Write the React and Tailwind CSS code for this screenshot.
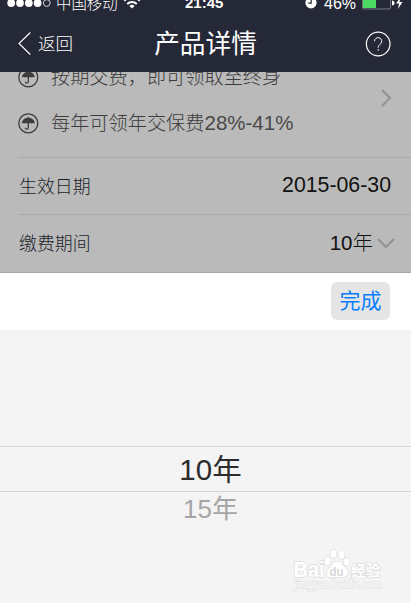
import { useState } from "react"

const OPTIONS = ["10", "15"]

function StatusBar() {
  return (
    <div className="flex h-[15px] shrink-0 items-end overflow-hidden">
      <div className="relative h-[22px] w-full text-white">
        <svg className="absolute left-[7px] top-[6px]" width="44" height="10" viewBox="0 0 44 10">
          <circle cx="4.2" cy="4" r="3.9" fill="#fff" />
          <circle cx="13" cy="4" r="3.9" fill="#fff" />
          <circle cx="21.8" cy="4" r="3.9" fill="#fff" />
          <circle cx="30.6" cy="4" r="3.9" fill="#fff" />
          <circle cx="39.8" cy="4" r="3.4" fill="none" stroke="#fff" strokeWidth="0.8" />
        </svg>
        <span className="absolute left-[56px] top-px text-[15.4px] leading-[20px] font-light whitespace-nowrap">中国移动</span>
        <svg className="absolute left-[123px] top-[3px]" width="18" height="13" viewBox="0 0 18 13" fill="none" stroke="#fff">
          <path d="M1.2 4.8a11 11 0 0 1 15.6 0" strokeWidth="2" />
          <path d="M4.2 8a6.8 6.8 0 0 1 9.6 0" strokeWidth="2" />
          <path d="M6.4 10a3.7 3.7 0 0 1 5.2 0L9 12.6z" fill="#fff" stroke="none" />
        </svg>
        <span className="absolute left-[185px] top-0 text-[15px] leading-[20px] font-bold">21:45</span>
        <svg className="absolute left-[305px] top-[3px]" width="12" height="13" viewBox="0 0 12 13">
          <circle cx="6" cy="6.8" r="5.6" fill="#fff" />
          <path d="M6.2 3v4.2H3.2" fill="none" stroke="#252836" strokeWidth="1.2" />
        </svg>
        <span className="absolute left-[324px] top-0 text-[16px] leading-[21px] whitespace-nowrap">46%</span>
        <svg className="absolute left-[362px] top-[2px]" width="42" height="15" viewBox="0 0 42 15">
          <rect x="0.5" y="1.5" width="28" height="12.5" rx="1.5" fill="none" stroke="#777985" />
          <rect x="1" y="2" width="13" height="11" fill="#4cd964" />
          <path d="M30 5.5a2.5 2.5 0 0 1 0 5z" fill="#fff" />
          <path d="M38.5 2L34 8.5h3l-1 5.5 4.5-7h-3z" fill="#fff" />
        </svg>
      </div>
    </div>
  )
}

function Header() {
  return (
    <header className="flex h-[72px] shrink-0 flex-col bg-[#252836] text-white">
      <StatusBar />
      <div className="grid h-[57px] grid-cols-[1fr_auto_1fr] items-center pl-[18px] pr-5">
        <button className="flex items-center gap-[7px] text-[17.5px] font-light">
          <svg width="13" height="23" viewBox="0 0 13 23" fill="none" stroke="#fff" strokeWidth="1.1">
            <path d="M12.3 0.5L1 11.5l11.3 11" />
          </svg>
          <span className="pt-[2px]">返回</span>
        </button>
        <h1 className="pl-[2px] text-[25.7px] leading-[30px]">产品详情</h1>
        <button className="justify-self-end">
          <svg width="26" height="26" viewBox="0 0 26 26" fill="none" stroke="#fff">
            <circle cx="13.2" cy="13" r="11.8" strokeWidth="1.2" />
            <path d="M9.5 10.2a3.6 3.6 0 1 1 6.2 2.5c-1.3 1.2-2.5 1.9-2.5 4M13.2 18.2v1.6" strokeWidth="1" />
          </svg>
        </button>
      </div>
    </header>
  )
}

function Umbrella() {
  return (
    <svg className="shrink-0" width="21" height="21" viewBox="0 0 21 21" fill="none" stroke="#3c3c3c">
      <circle cx="10.3" cy="10.3" r="9.5" strokeWidth="1.3" />
      <path d="M3.8 10.6C4 7.2 6.6 5 9.8 4.7V3.8h1v.9c3.200.300 5.900 2.500 6.100 5.900-1-.9-2.200-.9-3.200 0-1-.9-1.900-.9-2.900 0h-1c-1-.9-1.900-.9-2.900 0-1-.9-2.100-.9-3.100 0z" fill="#3c3c3c" stroke="none" />
      <path d="M10.300 10v4.700c0 2-3 2-3 0" strokeWidth="1.300" />
    </svg>
  )
}

function Details({ years }) {
  return (
    <main className="flex h-[201px] shrink-0 flex-col overflow-hidden border-b border-[#a6a6a6] bg-[#bababa] pl-[18px]">
      <div className="flex h-[86px] shrink-0 items-end justify-between border-b border-[#a9a9a9] pr-[19px]">
        <div className="flex flex-col pb-[20px] text-[19.2px] leading-[28px] text-[#3c3c3c] font-light">
          <div className="flex h-[46px] items-start gap-[12px] whitespace-nowrap">
            <div className="flex h-[28px] items-center">
              <Umbrella />
            </div>
            <span className="pt-px">按期交费，即可领取至终身</span>
          </div>
          <div className="flex h-[28px] items-center gap-[12px] whitespace-nowrap">
            <Umbrella />
            <span>
              每年可领年交保费<span className="text-[20.5px] text-[#484848]">28%-41%</span>
            </span>
          </div>
        </div>
        <svg className="mb-[50px]" width="11" height="18" viewBox="0 0 11 18" fill="none" stroke="#929292" strokeWidth="2">
          <path d="M1 1l8 8-8 8" />
        </svg>
      </div>
      <div className="flex h-[57px] shrink-0 items-center justify-between border-b border-[#a9a9a9] pr-[20px]">
        <span className="pt-[2px] pl-px text-[17.9px] font-light text-[#1b1e2b]">生效日期</span>
        <span className="text-[21.3px] text-[#111]">2015-06-30</span>
      </div>
      <div className="flex h-[57px] shrink-0 items-center justify-between pr-[16px]">
        <span className="pt-[2px] pl-px text-[17.9px] font-light text-[#1b1e2b]">缴费期间</span>
        <span className="flex items-center gap-[4px] text-[20.5px] font-light text-[#111]">
          {years}年
          <svg width="18" height="11" viewBox="0 0 18 11" fill="none" stroke="#929292" strokeWidth="2">
            <path d="M1 1l8 8 8-8" />
          </svg>
        </span>
      </div>
    </main>
  )
}

function Watermark() {
  return (
    <svg className="absolute left-[290px] top-[546px]" width="96" height="48" viewBox="0 0 96 48" fill="#fff" stroke="#dcdcdc" strokeWidth="1.4" paintOrder="stroke">
      <ellipse cx="37.7" cy="15" rx="3" ry="4" />
      <ellipse cx="43.3" cy="8" rx="3" ry="4.2" />
      <ellipse cx="51.5" cy="8.800" rx="3" ry="4.200" />
      <ellipse cx="56.700" cy="16" rx="3" ry="3.800" />
      <path d="M47 15.500c-4 0-5 4.500-8 7-3.500 3-3.500 8.500 1.500 8.500h13c5 0 6-5.500 2.500-8.500-3-2.500-4-7-9-7z" />
      <g className="font-bold">
        <text x="3.500" y="31" fontSize="21.500" textLength="31" lengthAdjust="spacingAndGlyphs">Bai</text>
        <text x="39.500" y="29.500" fontSize="12.500" fill="#d8d8d8" stroke="none" textLength="14" lengthAdjust="spacingAndGlyphs">du</text>
        <text x="61" y="29.500" fontSize="15" textLength="29.500" lengthAdjust="spacingAndGlyphs">经验</text>
      </g>
      <text className="font-['Liberation_Serif',serif]" x="4" y="41.500" fontSize="12" strokeWidth="1" textLength="88" lengthAdjust="spacingAndGlyphs">jingyan.baidu.com</text>
    </svg>
  )
}

function Picker({ years, onSelect }) {
  return (
    <section className="flex flex-1 flex-col bg-[#f4f4f4]">
      <div className="flex h-[57px] shrink-0 items-center justify-end bg-white pr-[21px] pb-px">
        <button className="h-[38px] w-[59px] rounded-[6px] bg-[#e5e5e5] text-[21px] leading-[38px] text-[#087dff]">完成</button>
      </div>
      <div className="flex flex-col items-center pt-[116px]">
        {OPTIONS.map((option) =>
          option === years ? (
            <button
              key={option}
              className="h-[46px] w-full border-y border-[#d5d5d5] pl-[10px] text-[29.5px] leading-[46px] text-[#2c2c2c]"
              onClick={() => onSelect(option)}
            >
              {option}年
            </button>
          ) : (
            <button
              key={option}
              className="h-[35px] w-full pl-[10px] text-[26px] leading-[35px] text-[#a5a5a5]"
              onClick={() => onSelect(option)}
            >
              {option}年
            </button>
          ),
        )}
      </div>
    </section>
  )
}

export default function App() {
  const [years, setYears] = useState("10")

  return (
    <div className="relative flex h-[603px] w-[411px] flex-col overflow-hidden font-['Liberation_Sans','Noto_Sans_CJK_SC',sans-serif]">
      <Header />
      <Details years={years} />
      <Picker years={years} onSelect={setYears} />
      <Watermark />
    </div>
  )
}
